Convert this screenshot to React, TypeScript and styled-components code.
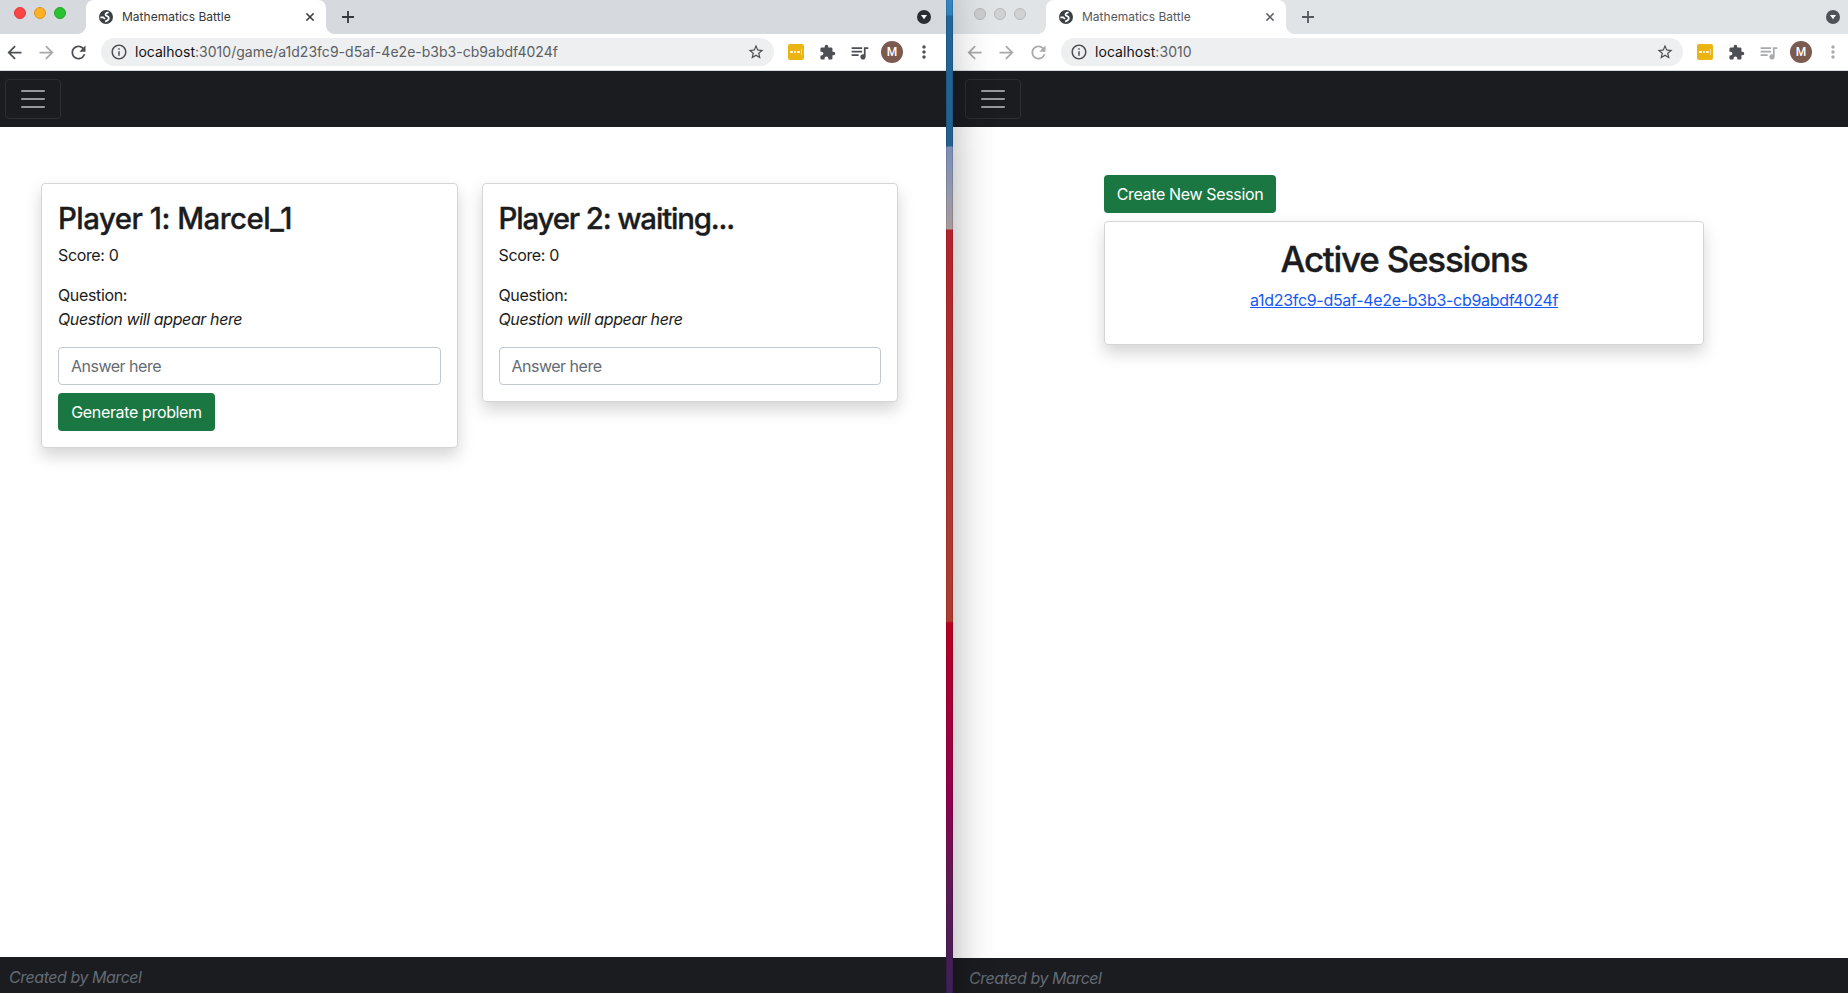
import React from 'react';
import styled, { createGlobalStyle } from 'styled-components';
import { MdArrowBack, MdArrowForward, MdRefresh, MdInfoOutline, MdStarBorder, MdExtension, MdQueueMusic, MdMoreVert } from 'react-icons/md';

const Global = createGlobalStyle`
  *, *::before, *::after { box-sizing: border-box; }
  body { margin: 0; overflow: hidden; font-family: Inter, "Liberation Sans", sans-serif; font-size: 16px; line-height: 24px; color: #1b1c20; }
  h1, h2, p { margin: 0; }
  svg { display: block; flex: none; }
`;

const Desktop = styled.div`
  display: flex;
  width: 1848px;
  height: 993px;
  overflow: hidden;
`;

const Wallpaper = styled.div`
  width: 7px;
  flex: none;
  background: linear-gradient(180deg, #3585c3 0, #3080bb 15px, #22659a 16px, #23608f 146px, #7a8eb8 147px, #9498ab 195px, #a99a9b 229px, #b4222d 230px, #ad302d 380px, #b03c30 621px, #b70022 623px, #a2003b 720px, #8f004e 800px, #5f1a54 880px, #4b1d56 950px, #3b2159 993px);
  box-shadow: inset 1px 0 rgba(0, 0, 0, 0.12), inset -1px 0 rgba(0, 0, 0, 0.12);
`;

const Window = styled.section<{ $w: number }>`
  position: relative;
  display: flex;
  flex-direction: column;
  flex: none;
  width: ${p => p.$w}px;
  height: 993px;
  background: #fff;
`;

const NeighbourShadow = styled.div`
  position: absolute;
  inset: 0 auto 0 0;
  width: 44px;
  pointer-events: none;
  background: linear-gradient(90deg, rgba(0, 0, 0, 0.17), rgba(0, 0, 0, 0.1) 10px, rgba(0, 0, 0, 0.045) 22px, rgba(0, 0, 0, 0.012) 34px, transparent);
  mask-image: linear-gradient(180deg, rgba(0, 0, 0, 0.55), #000 160px);
`;

const TabStrip = styled.div<{ $active: boolean; $inset: number }>`
  display: flex;
  height: 34px;
  flex: none;
  padding: 0 ${p => (p.$active ? 15 : 8)}px 0 ${p => 14 + p.$inset}px;
  background: ${p => (p.$active ? '#d6d9de' : '#e0e4e7')};
  color: ${p => (p.$active ? '#35373b' : '#55585c')};
`;

const Lights = styled.div<{ $top: number }>`
  display: flex;
  gap: 8px;
  width: 72px;
  padding-top: ${p => p.$top}px;
`;

const Light = styled.i<{ $fill: string; $edge: string }>`
  width: 12px;
  height: 12px;
  border-radius: 50%;
  background: ${p => p.$fill};
  border: 1px solid ${p => p.$edge};
`;

const Tab = styled.div`
  position: relative;
  display: flex;
  align-items: center;
  width: 240px;
  height: 34px;
  padding: 0 12px 0 13px;
  border-radius: 8px 8px 0 0;
  background: #fff;

  &::before, &::after {
    content: '';
    position: absolute;
    bottom: 0;
    width: 8px;
    height: 8px;
  }
  &::before { right: 100%; background: radial-gradient(circle at 0 0, transparent 7.5px, #fff 8px); }
  &::after { left: 100%; background: radial-gradient(circle at 100% 0, transparent 7.5px, #fff 8px); }
`;

const TabTitle = styled.span`
  flex: 1;
  margin-left: 9px;
  font-size: 12px;
  line-height: 34px;
  letter-spacing: 0.02px;
`;

const NewTab = styled.div`
  display: flex;
  align-items: center;
  flex: 1;
  padding-left: 16px;
`;

const TabSearch = styled.div`
  display: flex;
  align-items: center;
`;

const Toolbar = styled.div<{ $active: boolean; $inset: number }>`
  display: flex;
  align-items: center;
  height: 37px;
  flex: none;
  padding: 0 ${p => (p.$active ? 12 : 5)}px 0 ${p => 4 + p.$inset}px;
  border-bottom: 1px solid #d5dadd;
  color: #4c4f54;
`;

const NavButtons = styled.div<{ $active: boolean }>`
  display: flex;
  gap: 11px;
  width: 97px;
  color: ${p => (p.$active ? '#4c4f54' : '#a7a9ab')};
  svg:nth-child(2) { color: #a7a9ab; }
`;

const Omnibox = styled.div`
  display: flex;
  align-items: center;
  flex: 1;
  height: 28px;
  padding: 0 9px 0 9px;
  border-radius: 14px;
  background: #eeeff1;
`;

const Url = styled.span<{ $spacing: number }>`
  flex: 1;
  margin-left: 7px;
  font-size: 14px;
  line-height: 28px;
  white-space: nowrap;
  letter-spacing: ${p => p.$spacing}px;
  color: #5b5e62;
  b { font-weight: 400; color: #111214; }
`;

const Actions = styled.div`
  display: flex;
  align-items: center;
  margin-left: 14px;
`;

const Extension = styled.span`
  display: flex;
  align-items: center;
  justify-content: center;
  gap: 1px;
  width: 16px;
  height: 16px;
  margin-right: 15px;
  border-radius: 2px;
  background: #eab512;
  i { width: 2.5px; height: 2.5px; border-radius: 50%; background: #fff; }
  i:last-child { width: 1px; height: 6px; border-radius: 0; background: #f7dc8b; }
`;

const QueueSlot = styled.span<{ $active: boolean }>`
  margin: 0 11px 0 13px;
  color: ${p => (p.$active ? '#4c4f54' : '#a7a9ab')};
`;

const Avatar = styled.span`
  width: 22px;
  height: 22px;
  margin-right: 11px;
  border-radius: 50%;
  background: #7b5a50;
  color: #fff;
  font: 500 12px/22px Roboto, sans-serif;
  text-align: center;
`;

const MenuSlot = styled.span<{ $active: boolean }>`
  color: ${p => (p.$active ? '#4c4f54' : '#a7a9ab')};
`;

const Navbar = styled.nav<{ $inset: number }>`
  height: 56px;
  flex: none;
  padding: 8px 0 0 ${p => 5 + p.$inset}px;
  background: #1b1c20;
`;

const Toggler = styled.button`
  display: block;
  width: 56px;
  height: 40px;
  padding: 4px 12px;
  border: 1px solid #2d2e32;
  border-radius: 4px;
  background: none;
`;

const Main = styled.main`
  flex: 1;
`;

const Players = styled(Main)`
  display: grid;
  grid-template-columns: 1fr 1fr;
  gap: 24px;
  align-items: start;
  padding: 56px 48px 0 41px;
`;

const Sessions = styled(Main)`
  display: flex;
  flex-direction: column;
  align-items: flex-start;
  gap: 8px;
  padding: 48px 0 0 151px;
`;

const Card = styled.article`
  padding: 16px;
  border: 1px solid #d4d5d6;
  border-radius: 4px;
  background: #fff;
  box-shadow: 0 8px 16px rgba(0, 0, 0, 0.17);
`;

const SessionCard = styled(Card)`
  width: 600px;
  height: 124px;
  text-align: center;
`;

const PlayerName = styled.h2<{ $spacing: number }>`
  height: 35px;
  margin-bottom: 8px;
  font-size: 29.4px;
  font-weight: 500;
  line-height: 37px;
  letter-spacing: ${p => p.$spacing}px;
  -webkit-text-stroke: 0.35px currentColor;
  white-space: nowrap;
`;

const Title = styled.h1`
  height: 42px;
  margin-bottom: 8px;
  font-size: 35px;
  font-weight: 500;
  line-height: 43px;
  letter-spacing: -1.25px;
  -webkit-text-stroke: 0.35px currentColor;
`;

const Line = styled.p`
  margin-bottom: 16px;
  letter-spacing: -0.36px;
`;

const Pending = styled.em`
  display: block;
  letter-spacing: -0.39px;
`;

const Answer = styled.input`
  display: block;
  width: 100%;
  height: 38px;
  padding: 6px 12px;
  border: 1px solid #c3c9d0;
  border-radius: 4px;
  font: 16px/24px Inter, sans-serif;
  letter-spacing: -0.5px;
  &::placeholder { color: #646b73; opacity: 1; }
`;

const Button = styled.button<{ $w: number }>`
  display: block;
  width: ${p => p.$w}px;
  height: 38px;
  padding: 0;
  border: 0;
  border-radius: 4px;
  background: #1b7742;
  color: #fff;
  font: 16px/24px Inter, sans-serif;
  letter-spacing: -0.35px;
`;

const Generate = styled(Button)`
  margin-top: 8px;
`;

const SessionLink = styled.a`
  color: #1458f5;
  text-decoration: underline;
  letter-spacing: -0.3px;
`;

const Footer = styled.footer<{ $h: number; $inset: number }>`
  height: ${p => p.$h}px;
  flex: none;
  padding: 8px 0 0 ${p => 9 + p.$inset}px;
  background: #1b1c20;
  color: #646b74;
  font-style: italic;
  letter-spacing: -0.46px;
`;

const Globe = () => (
  <svg width="14" height="14" viewBox="0 0 14 14">
    <circle cx="7" cy="7" r="7" fill="#3c4044" />
    <path d="M9.6 2.7C7.2 2.4 5.6 4.4 7 5.5C8.2 6.4 9.7 6.2 9.8 8C9.9 9.8 8.2 10.9 6.2 11.6M1.4 7.3H4.3L6 9" fill="none" stroke="#fff" strokeWidth="1.7" />
  </svg>
);

const Cross = () => (
  <svg width="8" height="8" viewBox="0 0 8 8">
    <path d="M0.4 0.4 7.6 7.6M7.6 0.4 0.4 7.6" stroke="currentColor" strokeWidth="1.5" />
  </svg>
);

const Plus = () => (
  <svg width="12" height="12" viewBox="0 0 12 12">
    <path d="M6 0V12M0 6H12" stroke="currentColor" strokeWidth="1.8" />
  </svg>
);

const DownBadge = ({ fill }: { fill: string }) => (
  <svg width="14" height="14" viewBox="0 0 14 14">
    <circle cx="7" cy="7" r="7" fill={fill} />
    <path d="M4 5h6L7 9.2Z" fill="#fff" />
  </svg>
);

const Bars = () => (
  <svg width="30" height="30" viewBox="0 0 30 30">
    <path d="M4 7h22M4 15h22M4 23h22" stroke="rgba(255,255,255,.55)" strokeWidth="2" strokeLinecap="round" />
  </svg>
);

type BrowserProps = {
  active: boolean;
  width: number;
  inset: number;
  path: string;
  spacing: number;
  footer: number;
  children: React.ReactNode;
};

const Browser = ({ active, width, inset, path, spacing, footer, children }: BrowserProps) => {
  const lights = active
    ? [['#fc4645', '#e0383a'], ['#fdb025', '#dd951c'], ['#2ac231', '#1fa626']]
    : [['#cbcdcf', '#b4b6b8'], ['#cfd1d3', '#b7b9bb'], ['#cfd1d3', '#b7b9bb']];
  return (
    <Window $w={width}>
      <TabStrip $active={active} $inset={inset}>
        <Lights $top={active ? 7 : 7.5}>
          {lights.map(([fill, edge], i) => <Light key={i} $fill={fill} $edge={edge} />)}
        </Lights>
        <Tab>
          <Globe />
          <TabTitle>Mathematics Battle</TabTitle>
          <Cross />
        </Tab>
        <NewTab><Plus /></NewTab>
        <TabSearch><DownBadge fill={active ? '#2b2e33' : '#505357'} /></TabSearch>
      </TabStrip>
      <Toolbar $active={active} $inset={inset}>
        <NavButtons $active={active}>
          <MdArrowBack size={21} />
          <MdArrowForward size={21} />
          <MdRefresh size={21} />
        </NavButtons>
        <Omnibox>
          <MdInfoOutline size={18} />
          <Url $spacing={spacing}><b>localhost</b>{path}</Url>
          <MdStarBorder size={18} />
        </Omnibox>
        <Actions>
          <Extension><i /><i /><i /><i /></Extension>
          <MdExtension size={17} />
          <QueueSlot $active={active}><MdQueueMusic size={21} /></QueueSlot>
          <Avatar>M</Avatar>
          <MenuSlot $active={active}><MdMoreVert size={20} /></MenuSlot>
        </Actions>
      </Toolbar>
      <Navbar $inset={inset}><Toggler aria-label="Menu"><Bars /></Toggler></Navbar>
      {children}
      <Footer $h={footer} $inset={inset}>Created by Marcel</Footer>
      {!active && <NeighbourShadow />}
    </Window>
  );
};

const Player = ({ name, spacing, host }: { name: string; spacing: number; host?: boolean }) => (
  <Card>
    <PlayerName $spacing={spacing}>{name}</PlayerName>
    <Line>Score: 0</Line>
    <Line as="div">Question:<Pending>Question will appear here</Pending></Line>
    <Answer placeholder="Answer here" />
    {host && <Generate $w={157}>Generate problem</Generate>}
  </Card>
);

export default function App() {
  return (
    <Desktop>
      <Global />
      <Browser active width={946} inset={0} path=":3010/game/a1d23fc9-d5af-4e2e-b3b3-cb9abdf4024f" spacing={0.02} footer={36}>
        <Players>
          <Player name="Player 1: Marcel_1" spacing={-0.5} host />
          <Player name="Player 2: waiting..." spacing={-1.15} />
        </Players>
      </Browser>
      <Wallpaper />
      <Browser active={false} width={895} inset={7} path=":3010" spacing={0.06} footer={35}>
        <Sessions>
          <Button $w={172}>Create New Session</Button>
          <SessionCard>
            <Title>Active Sessions</Title>
            <SessionLink href="#">a1d23fc9-d5af-4e2e-b3b3-cb9abdf4024f</SessionLink>
          </SessionCard>
        </Sessions>
      </Browser>
    </Desktop>
  );
}
